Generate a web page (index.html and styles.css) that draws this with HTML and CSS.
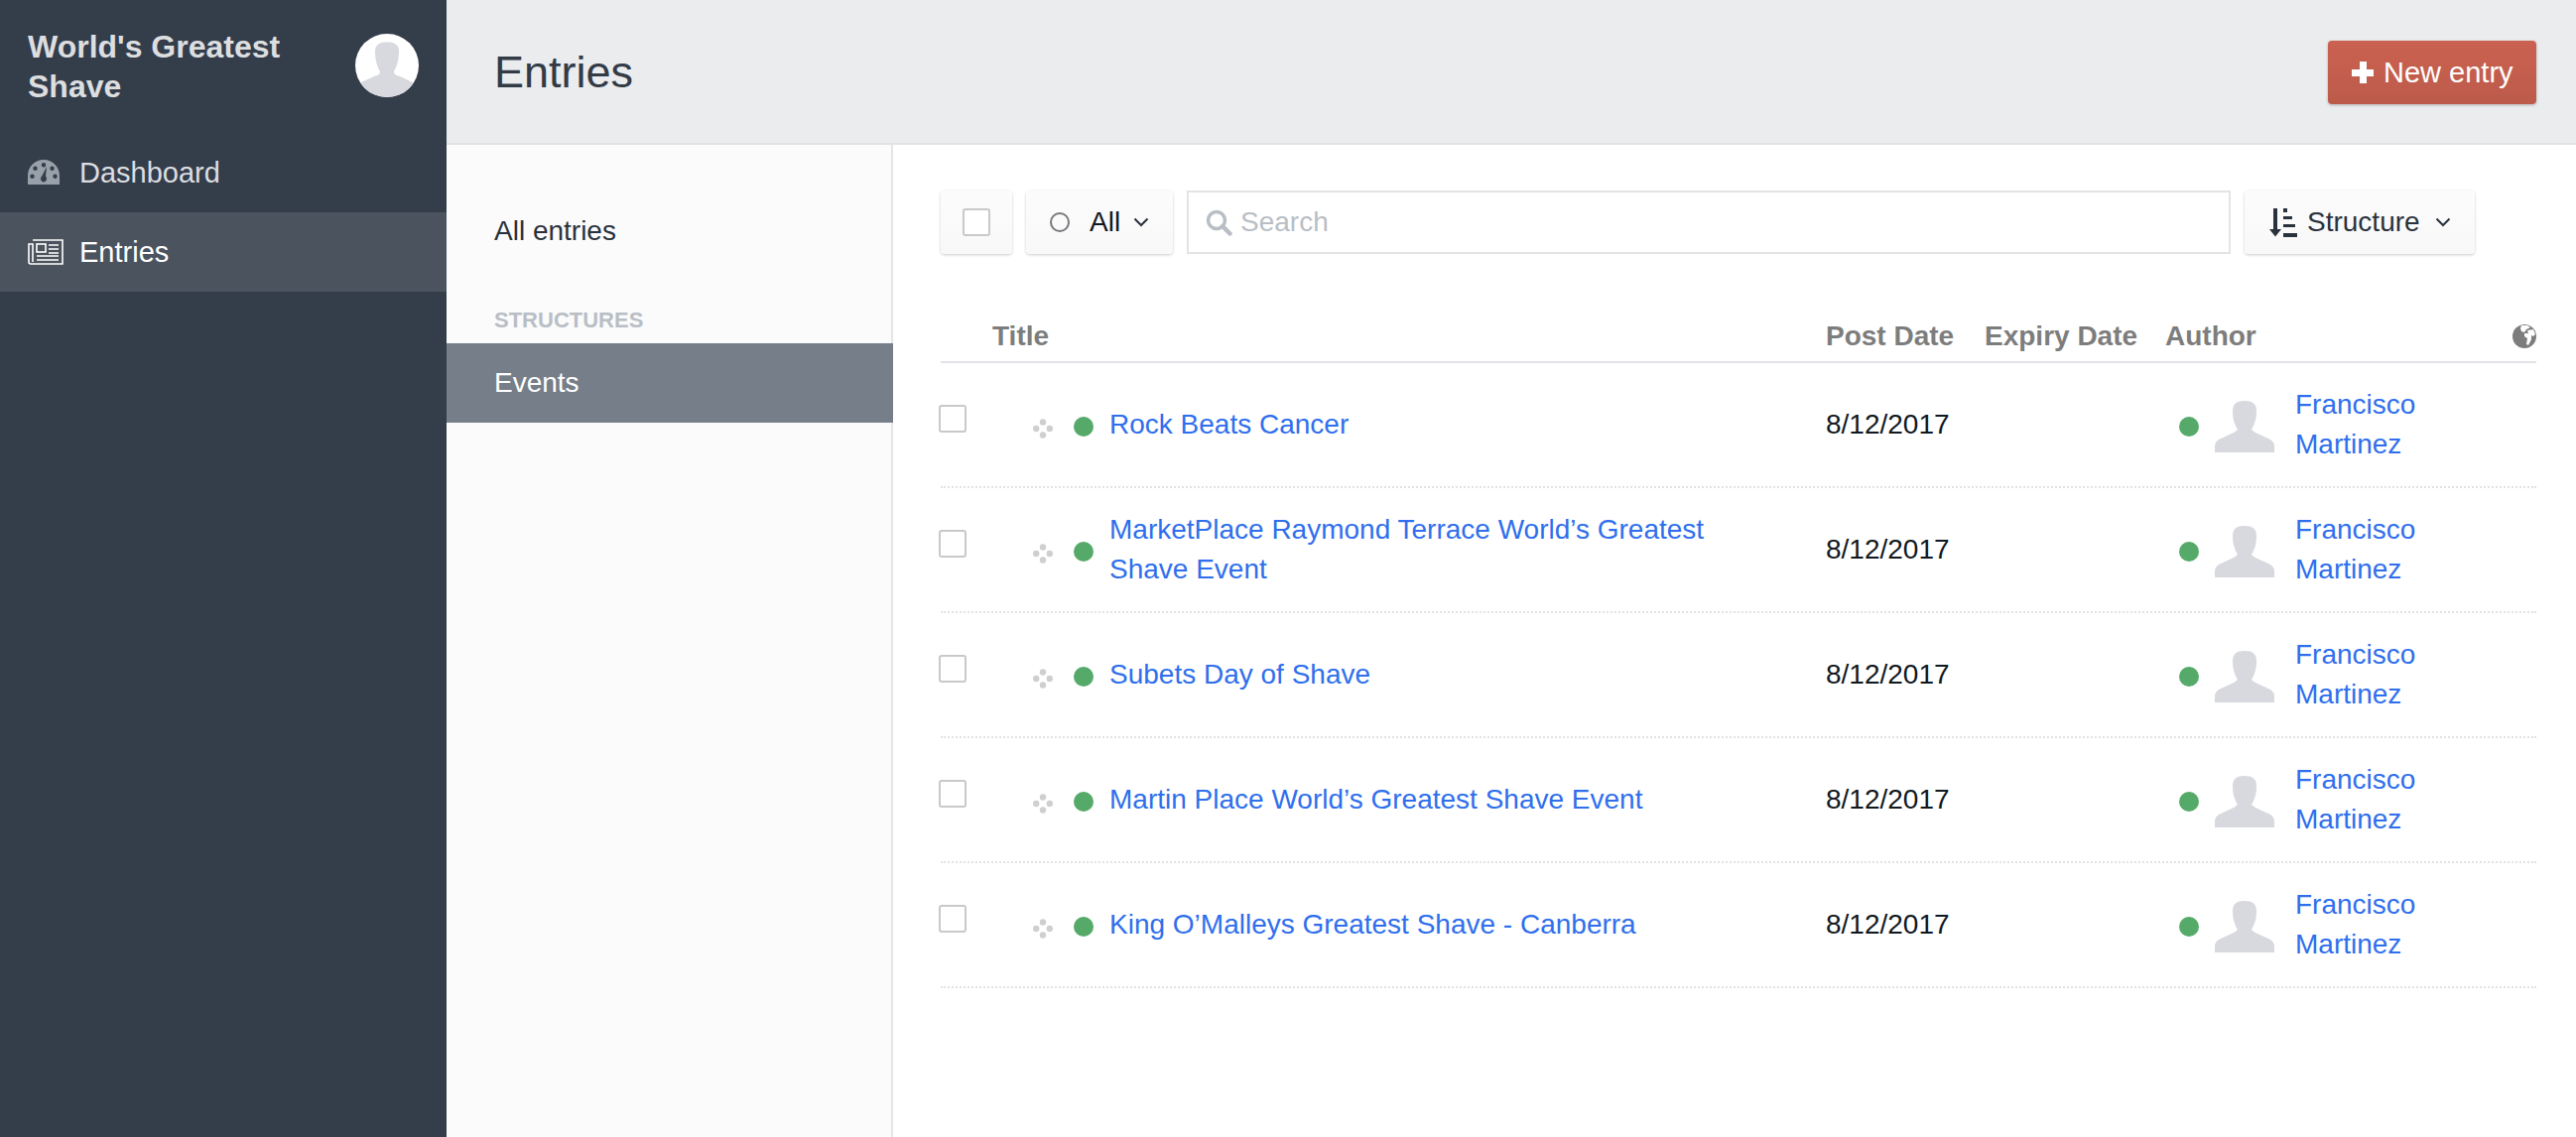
FILE: index.html
```html
<!DOCTYPE html>
<html lang="en">
<head>
    <meta charset="UTF-8">
    <title>Entries</title>
    <link rel="stylesheet" href="styles.css">
</head>
<body>

<svg class="sprite" width="0" height="0">
    <symbol id="person" viewBox="0 0 60 52">
        <path d="M30 0C38 0 42 3 42 10C42 17 41 22 37 29C39 31 41 32 43 33L56 39C59 41 60 43 60 46V52H0V46C0 43 1 41 4 39L17 33C19 32 21 31 23 29C19 22 18 17 18 10C18 3 22 0 30 0Z"/>
    </symbol>
    <symbol id="drag" viewBox="0 0 20 20">
        <circle cx="10" cy="3.5" r="3.2"/>
        <circle cx="3.2" cy="10" r="3.2"/>
        <circle cx="16.8" cy="10" r="3.2"/>
        <circle cx="10" cy="16.5" r="3.2"/>
    </symbol>
</svg>

<!-- left nav -->
<aside class="sidebar">
    <div class="site">
        <div class="site-name">World's Greatest Shave</div>
        <div class="user-pic">
            <svg width="64" height="64" viewBox="0 0 64 64">
                <path d="M32 8.500C40 8.500 44 11 44 18C44 26 42 33 39 38C39 41 41 42 45 43L58 49V64H6V49L19 43C23 42 25 41 25 38C22 33 20 26 20 18C20 11 24 8.500 32 8.500Z"/>
            </svg>
        </div>
    </div>
    <a class="nav-item">
        <svg class="nav-icon" width="36" height="26" viewBox="0 0 36 26" preserveAspectRatio="xMinYMid">
            <path fill="#98a0aa" fill-rule="evenodd" d="M0 25V16C0 7 7 0 16 0S32 7 32 16V25H0ZM16 3A2.2 2.2 0 1 0 16 7.400A2.200 2.200 0 1 0 16 3ZM7.500 6.500A2.200 2.200 0 1 0 7.500 10.900A2.200 2.200 0 1 0 7.500 6.500ZM24.500 6.500A2.200 2.200 0 1 0 24.500 10.900A2.200 2.200 0 1 0 24.500 6.500ZM4.500 14.500A2.200 2.200 0 1 0 4.500 18.900A2.200 2.200 0 1 0 4.500 14.500ZM27.500 14.500A2.200 2.200 0 1 0 27.500 18.900A2.200 2.200 0 1 0 27.500 14.500ZM19 7L14.200 16.500A3 3 0 0 0 13 19C13 21 14.500 22.500 16 22.500S19 21 19 19C19 18 18.500 17.200 18 16.800Z"/>
        </svg>
        Dashboard
    </a>
    <a class="nav-item nav-item-on">
        <svg class="nav-icon" width="36" height="26" viewBox="0 0 36 26" fill="none" stroke="#fff" stroke-width="1.600">
            <path d="M5 1H35V25H3C1.800 25 1 24.200 1 23V5H5V23"/>
            <rect x="9" y="5" width="9" height="8"/>
            <path d="M21 6H31M21 10H31M21 14H31M9 17H31M9 21H31"/>
        </svg>
        Entries
    </a>
</aside>

<div class="page">
    <header class="page-head">
        <h1>Entries</h1>
        <a class="btn-new"><span class="plus"></span>New entry</a>
    </header>

    <div class="page-body">
        <nav class="subnav">
            <a class="sub-item">All entries</a>
            <div class="sub-title">STRUCTURES</div>
            <a class="sub-item sub-item-on">Events</a>
        </nav>

        <main class="content">
            <div class="toolbar">
                <div class="btn btn-check"><span class="checkbox"></span></div>
                <div class="btn btn-status">
                    <span class="ring"></span>All
                    <svg class="caret" width="16" height="10" viewBox="0 0 16 10"><path d="M1.500 1.500L8 8L14.500 1.500"/></svg>
                </div>
                <div class="search">
                    <svg width="27" height="27" viewBox="0 0 27 27" fill="none" stroke="#b9bec5">
                        <circle cx="11" cy="11" r="8.500" stroke-width="3.500"/>
                        <path d="M17 17L24.500 24.500" stroke-width="4.500" stroke-linecap="round"/>
                    </svg>
                    <input class="search-input" type="text" placeholder="Search">
                </div>
                <div class="btn btn-sort">
                    <svg width="28" height="29" viewBox="0 0 28 29" fill="#29323d">
                        <path d="M4 0H8V21H12L6 28.500L0 21H4Z"/>
                        <rect x="14" y="0" width="4" height="4"/>
                        <rect x="14" y="8" width="9" height="3"/>
                        <rect x="14" y="16" width="12" height="3"/>
                        <rect x="14" y="25" width="14" height="4"/>
                    </svg>
                    Structure
                    <svg class="caret" width="16" height="10" viewBox="0 0 16 10"><path d="M1.500 1.500L8 8L14.500 1.500"/></svg>
                </div>
            </div>

            <div class="row row-head">
                <div class="col-title">Title</div>
                <div>Post Date</div>
                <div>Expiry Date</div>
                <div class="col-author">Author
                    <svg class="globe" width="24" height="24" viewBox="0 0 24 24">
                        <circle cx="12" cy="12" r="12" fill="#7d7d7d"/>
                        <path fill="#fff" d="M9 1L15 1L18 3L14 5L12 8L9 7L8 4ZM15 6L21 5L23 10L21 12L19 11L19 15L16 21L14 20L15 14L12 12L12 9L16 9Z"/>
                    </svg>
                </div>
            </div>

            <div id="rows"></div>
        </main>
    </div>
</div>

<script>
    var entries = [
        ['Rock Beats Cancer'],
        ['MarketPlace Raymond Terrace World’s Greatest', 'Shave Event'],
        ['Subets Day of Shave'],
        ['Martin Place World’s Greatest Shave Event'],
        ['King O’Malleys Greatest Shave - Canberra']
    ];

    var rows = document.getElementById('rows');

    entries.forEach(function (title) {
        var row = document.createElement('div');
        row.className = 'row';
        row.innerHTML =
            '<div class="cell-title">' +
                '<span class="checkbox row-check"></span>' +
                '<svg class="drag" width="20" height="20"><use href="#drag"/></svg>' +
                '<span class="dot"></span>' +
                '<a class="link">' + title.join('<br>') + '</a>' +
            '</div>' +
            '<div class="cell-date">8/12/2017</div>' +
            '<div></div>' +
            '<div class="cell-author">' +
                '<span class="dot"></span>' +
                '<svg class="author-pic" width="60" height="52"><use href="#person"/></svg>' +
                '<a class="link">Francisco<br>Martinez</a>' +
            '</div>';
        rows.appendChild(row);
    });
</script>

</body>
</html>
```

FILE: styles.css
```css
* {
    box-sizing: border-box;
}

body {
    font-family: "Liberation Sans", Arial, sans-serif;
    font-size: 28px;
    line-height: 40px;
    margin: 0;
    height: 1146px;
    overflow: hidden;
    display: flex;
    background-color: #fff;
    color: #29323d;
}

.sprite {
    position: absolute;
}

.sidebar {
    width: 450px;
    flex-shrink: 0;
    background-color: #343d4a;
    color: #dcdee0;
}

.site {
    height: 134px;
    padding: 27px 28px 0;
    display: flex;
    justify-content: space-between;
}

.site-name {
    width: 290px;
    font-size: 32px;
    font-weight: bold;
    color: #dcdee0;
}

.user-pic {
    width: 64px;
    height: 64px;
    margin-top: 7px;
    border-radius: 50%;
    background-color: #fff;
    overflow: hidden;
    fill: #d8d9de;
}

.nav-item {
    height: 80px;
    padding-left: 28px;
    display: flex;
    align-items: center;
    font-size: 29px;
    color: #dcdee0;
}

.nav-icon {
    margin-right: 16px;
}

.nav-item-on {
    background-color: #4b535f;
    color: #fff;
}

.page {
    flex: 1;
    display: flex;
    flex-direction: column;
}

.page-head {
    height: 146px;
    padding: 2px 40px 0 48px;
    display: flex;
    justify-content: space-between;
    align-items: center;
    background-color: #ebecee;
    border-bottom: 2px solid #e2e3e5;
}

.page-head h1 {
    margin: 0;
    font-size: 45px;
    font-weight: normal;
    color: #333b46;
}

.btn-new {
    width: 210px;
    height: 64px;
    padding-left: 24px;
    display: flex;
    align-items: center;
    border-radius: 4px;
    background: linear-gradient(#cb6150, #bc5b4a);
    box-shadow: 0 1px 3px rgba(0, 0, 0, 0.25);
    font-size: 29px;
    color: #fff;
}

.plus {
    width: 22px;
    height: 22px;
    margin-right: 10px;
    background:
        linear-gradient(#fff, #fff) center / 22px 7px no-repeat,
        linear-gradient(#fff, #fff) center / 7px 22px no-repeat;
}

.page-body {
    flex: 1;
    display: flex;
}

.subnav {
    width: 450px;
    flex-shrink: 0;
    padding-top: 47px;
    background-color: #fbfbfb;
    border-right: 2px solid #e5e5e7;
}

.sub-item {
    height: 80px;
    padding-left: 48px;
    display: flex;
    align-items: center;
    color: #29323d;
}

.sub-title {
    margin-top: 30px;
    padding-left: 48px;
    font-size: 22px;
    line-height: 40px;
    font-weight: bold;
    color: #b9bec5;
}

.sub-item-on {
    margin-top: 3px;
    margin-right: -2px;
    background-color: #767e89;
    color: #fff;
}

.content {
    flex: 1;
    padding: 46px 40px 0 48px;
}

.toolbar {
    display: flex;
    gap: 14px;
    height: 64px;
}

.btn {
    display: flex;
    align-items: center;
    border-radius: 4px;
    background: linear-gradient(#fcfcfc, #f8f8f8);
    box-shadow: 0 1px 3px rgba(0, 0, 0, 0.2);
    color: #111820;
}

.btn-check {
    width: 72px;
    justify-content: center;
}

.checkbox {
    display: block;
    width: 28px;
    height: 28px;
    background-color: #fff;
    border: 2px solid #c9c9cb;
    border-radius: 3px;
}

.btn-status {
    width: 148px;
    padding-left: 24px;
}

.ring {
    width: 20px;
    height: 20px;
    margin-right: 20px;
    border: 2px solid #77797c;
    border-radius: 50%;
}

.caret {
    margin-left: 13px;
    fill: none;
    stroke: #29323d;
    stroke-width: 2;
}

.search {
    flex: 1;
    display: flex;
    align-items: center;
    padding-left: 17px;
    border: 2px solid #e4e4e4;
    background-color: #fff;
}

.search-input {
    flex: 1;
    margin-left: 8px;
    padding: 0;
    border: 0;
    outline: 0;
    font: inherit;
    color: #29323d;
}

.search-input::placeholder {
    color: #b9bec5;
    opacity: 1;
}

.btn-sort {
    width: 232px;
    margin-right: 62px;
    padding-left: 25px;
    gap: 10px;
    color: #29323d;
}

.btn-sort .caret {
    margin-left: 5px;
}

.row {
    display: grid;
    grid-template-columns: 892px 160px 182px 374px;
    height: 126px;
    align-items: center;
    border-bottom: 2px dotted #e2e2e2;
}

.row-head {
    height: 65px;
    margin-top: 45px;
    padding-bottom: 5px;
    align-items: end;
    border-bottom: 2px solid #e2e2e8;
    font-weight: bold;
    color: #7d7d7d;
}

.col-title {
    padding-left: 52px;
}

.col-author {
    display: flex;
    justify-content: space-between;
}

.globe {
    margin-top: 8px;
}

.cell-title,
.cell-author {
    display: flex;
    align-items: center;
}

.row-check {
    position: relative;
    top: -6px;
    margin-left: -2px;
}

.drag {
    margin: 8px 0 0 67px;
    fill: #cfcfcf;
}

.dot {
    width: 20px;
    height: 20px;
    margin-top: 4px;
    border-radius: 50%;
    background-color: #56aa69;
    flex-shrink: 0;
}

.cell-title .dot {
    margin-left: 21px;
}

.link {
    margin-left: 16px;
    color: #2f6fed;
}

.cell-date {
    color: #111820;
}

.cell-author .dot {
    margin-left: 14px;
}

.author-pic {
    margin: 4px 0 0 16px;
    fill: #d8d9de;
}

.cell-author .link {
    margin-left: 21px;
}
```
